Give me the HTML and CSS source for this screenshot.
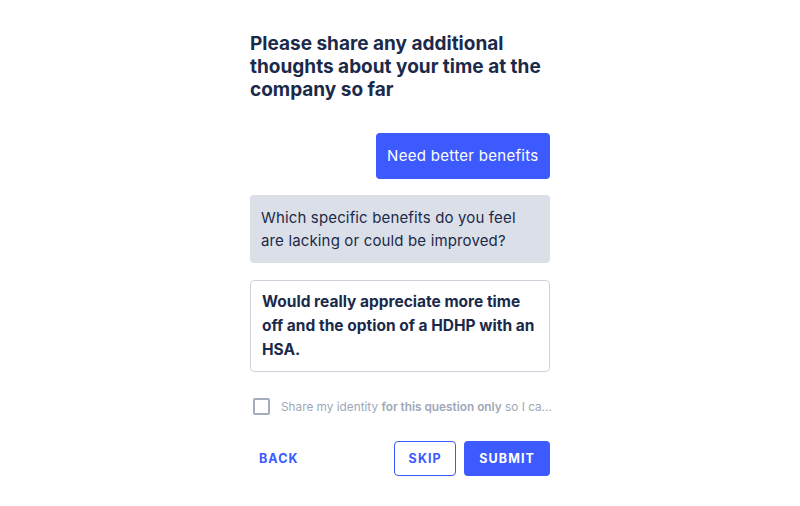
FILE: index.html
```html
<!DOCTYPE html>
<html lang="en">
<head>
    <meta charset="UTF-8">
    <title>Feedback</title>
    <link rel="stylesheet" href="styles.css">
</head>
<body>
    <main class="survey">
        <h1 class="question">Please share any additional thoughts about your time at the company so far</h1>

        <div class="chat">
            <p class="bubble bubble-user">Need better benefits</p>
            <p class="bubble bubble-bot">Which specific benefits do you feel are lacking or could be improved?</p>
            <div class="answer">Would really appreciate more time off and the option of a HDHP with an HSA.</div>
        </div>

        <label class="share">
            <span class="checkbox"></span>
            <span class="share-text">Share my identity <strong>for this question only</strong> so I ca...</span>
        </label>

        <div class="actions">
            <button class="btn btn-back">Back</button>
            <div class="actions-right">
                <button class="btn btn-outline">Skip</button>
                <button class="btn btn-primary">Submit</button>
            </div>
        </div>
    </main>
</body>
</html>
```

FILE: styles.css
```css
* {
    box-sizing: border-box;
}

body {
    margin: 0;
    background: #fff;
    font-family: Inter, "Noto Sans", sans-serif;
    color: #1b2a4a;
}

.survey {
    width: 300px;
    margin: 0 auto;
    padding-top: 32px;
}

.question {
    margin: 0;
    font-size: 19px;
    line-height: 23px;
    font-weight: 700;
    color: #1b2a4a;
}

.chat {
    display: flex;
    flex-direction: column;
    align-items: flex-end;
    margin-top: 32px;
}

.bubble {
    margin: 0;
    border-radius: 4px;
    font-size: 15px;
}

.bubble-user {
    background: #3d5afe;
    color: #fff;
    padding: 12px 11.5px;
    line-height: 22px;
    letter-spacing: 0.3px;
}

.bubble-bot {
    align-self: stretch;
    margin-top: 16px;
    background: #dbdfe7;
    padding: 11px 11px;
    line-height: 23px;
    letter-spacing: 0.15px;
    color: #1b2a4a;
}

.answer {
    align-self: stretch;
    margin-top: 17px;
    padding: 9px 11px;
    border: 1px solid #cdd2dc;
    border-radius: 4px;
    font-size: 15.5px;
    line-height: 24px;
    font-weight: 700;
    color: #1b2a4a;
}

.share {
    display: flex;
    align-items: center;
    gap: 11px;
    margin-top: 26px;
    padding-left: 3px;
}

.checkbox {
    flex: none;
    width: 17px;
    height: 17px;
    border: 2px solid #a4acbd;
    border-radius: 2px;
}

.share-text {
    font-size: 11.8px;
    color: #a0a8b8;
    white-space: nowrap;
}

.share-text strong {
    font-weight: 600;
}

.actions {
    display: flex;
    justify-content: space-between;
    align-items: center;
    margin-top: 26px;
}

.actions-right {
    display: flex;
    gap: 8px;
}

.btn {
    height: 35px;
    padding: 0 13.5px;
    border: 1px solid transparent;
    border-radius: 4px;
    background: none;
    font-family: inherit;
    font-size: 12.5px;
    font-weight: 700;
    letter-spacing: 1.1px;
    text-transform: uppercase;
    cursor: pointer;
}

.btn-back {
    padding: 0 8px;
    color: #3d5afe;
}

.btn-outline {
    border-color: #3d5afe;
    color: #3d5afe;
}

.btn-primary {
    padding: 0 14px;
    background: #3d5afe;
    color: #fff;
}
```
